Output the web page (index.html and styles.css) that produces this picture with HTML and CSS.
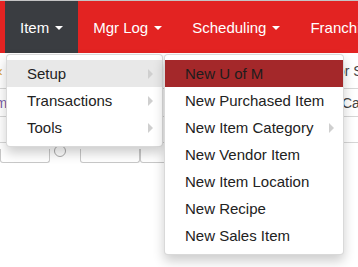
FILE: index.html
```html
<!DOCTYPE html>
<html>
<head>
<meta charset="utf-8">
<link rel="stylesheet" href="styles.css">
</head>
<body>
<div class="page">
  <nav class="navbar">
    <div class="nav-item active">Item <span class="caret"></span></div>
    <div class="nav-item">Mgr Log <span class="caret"></span></div>
    <div class="nav-item">Scheduling <span class="caret"></span></div>
    <div class="nav-item">Franchise <span class="caret"></span></div>
  </nav>
  <div class="content">
    <div class="row r1"><span class="cell c-left">‹</span><span class="cell c-right">Vendor Search</span></div>
    <div class="row r2"><span class="cell c-left tx">Item</span><span class="cell c-right c2">Category</span></div>
    <div class="row r3"></div>
    <div class="row r4"><span class="box b1"></span><span class="circ"></span><span class="box b2"></span><span class="box b3"></span></div>
  </div>

  <ul class="menu main-menu">
    <li class="sel">Setup<span class="arrow"></span></li>
    <li>Transactions<span class="arrow"></span></li>
    <li>Tools<span class="arrow"></span></li>
  </ul>
  <ul class="menu sub-menu">
    <li class="hot">New U of M</li>
    <li>New Purchased Item</li>
    <li>New Item Category<span class="arrow"></span></li>
    <li>New Vendor Item</li>
    <li>New Item Location</li>
    <li>New Recipe</li>
    <li>New Sales Item</li>
  </ul>
</div>
</body>
</html>
```
FILE: styles.css
```css
* { box-sizing: border-box; }
html, body { margin: 0; padding: 0; }
body {
  width: 358px;
  height: 267px;
  overflow: hidden;
  background: #fff;
  font-family: "Liberation Sans", Arial, sans-serif;
  font-size: 15px;
}
.page { position: relative; height: 267px; border-top: 1px solid #c4c4c4; }
.navbar {
  display: flex;
  height: 52px;
  background: #e32322;
  padding-left: 5px;
  white-space: nowrap;
}
.nav-item {
  display: flex;
  align-items: center;
  padding: 0 15px;
  color: #fff;
  flex: none;
}
.nav-item.active { background: #3a3d41; }
.caret {
  display: inline-block;
  width: 0; height: 0;
  margin-left: 6px;
  margin-top: 2px;
  border-left: 4px solid transparent;
  border-right: 4px solid transparent;
  border-top: 4px solid #fff;
}
.content { padding-top: 0; }
.row {
  display: flex;
  align-items: center;
  border-bottom: 1px solid #d6d6d6;
  position: relative;
  white-space: nowrap;
  color: #555;
  font-size: 14px;
}
.r1 { height: 36px; }
.r2 { height: 28px; }
.r3 { height: 26px; }
.r4 { height: 30px; border-bottom: none; align-items: flex-start; padding-top: 6px; }
.cell { flex: none; }
.c-left { width: 307px; color: #d49a2a; margin-left: -2px; }
.c-left.tx { color: #7a5fa6; margin-left: -20px; width: 336px; }
.c-right { color: #444; margin-left: 0; }
.c2 { margin-left: 26px; }
.box { display: block; height: 14px; border: 1px solid #c8c8c8; border-top: none; border-radius: 0 0 3px 3px; }
.b1 { width: 50px; }
.circ { width: 12px; height: 12px; border: 1px solid #aaa; border-radius: 50%; margin: -4px 8px 0 4px; }
.b2 { width: 60px; margin-left: 6px; }
.b3 { width: 60px; }

.menu {
  position: absolute;
  margin: 0;
  list-style: none;
  background: #fff;
  border: 1px solid rgba(0,0,0,.15);
  border-radius: 4px;
  box-shadow: 0 6px 12px rgba(0,0,0,.2);
  padding: 5px 0;
  color: #222;
}
.menu li {
  position: relative;
  height: 27px;
  line-height: 27px;
  padding: 0 20px;
  white-space: nowrap;
}
.main-menu { top: 53px; left: 6px; width: 157px; }
.sub-menu { top: 53px; left: 164px; width: 180px; }
.menu li.sel { background: #e8e8e8; }
.menu li.hot { background: #a4282a; color: #1d1d1d; }
.arrow {
  position: absolute;
  right: 9px;
  top: 9px;
  width: 0; height: 0;
  border-top: 5px solid transparent;
  border-bottom: 5px solid transparent;
  border-left: 5px solid #cfcfcf;
}
```
